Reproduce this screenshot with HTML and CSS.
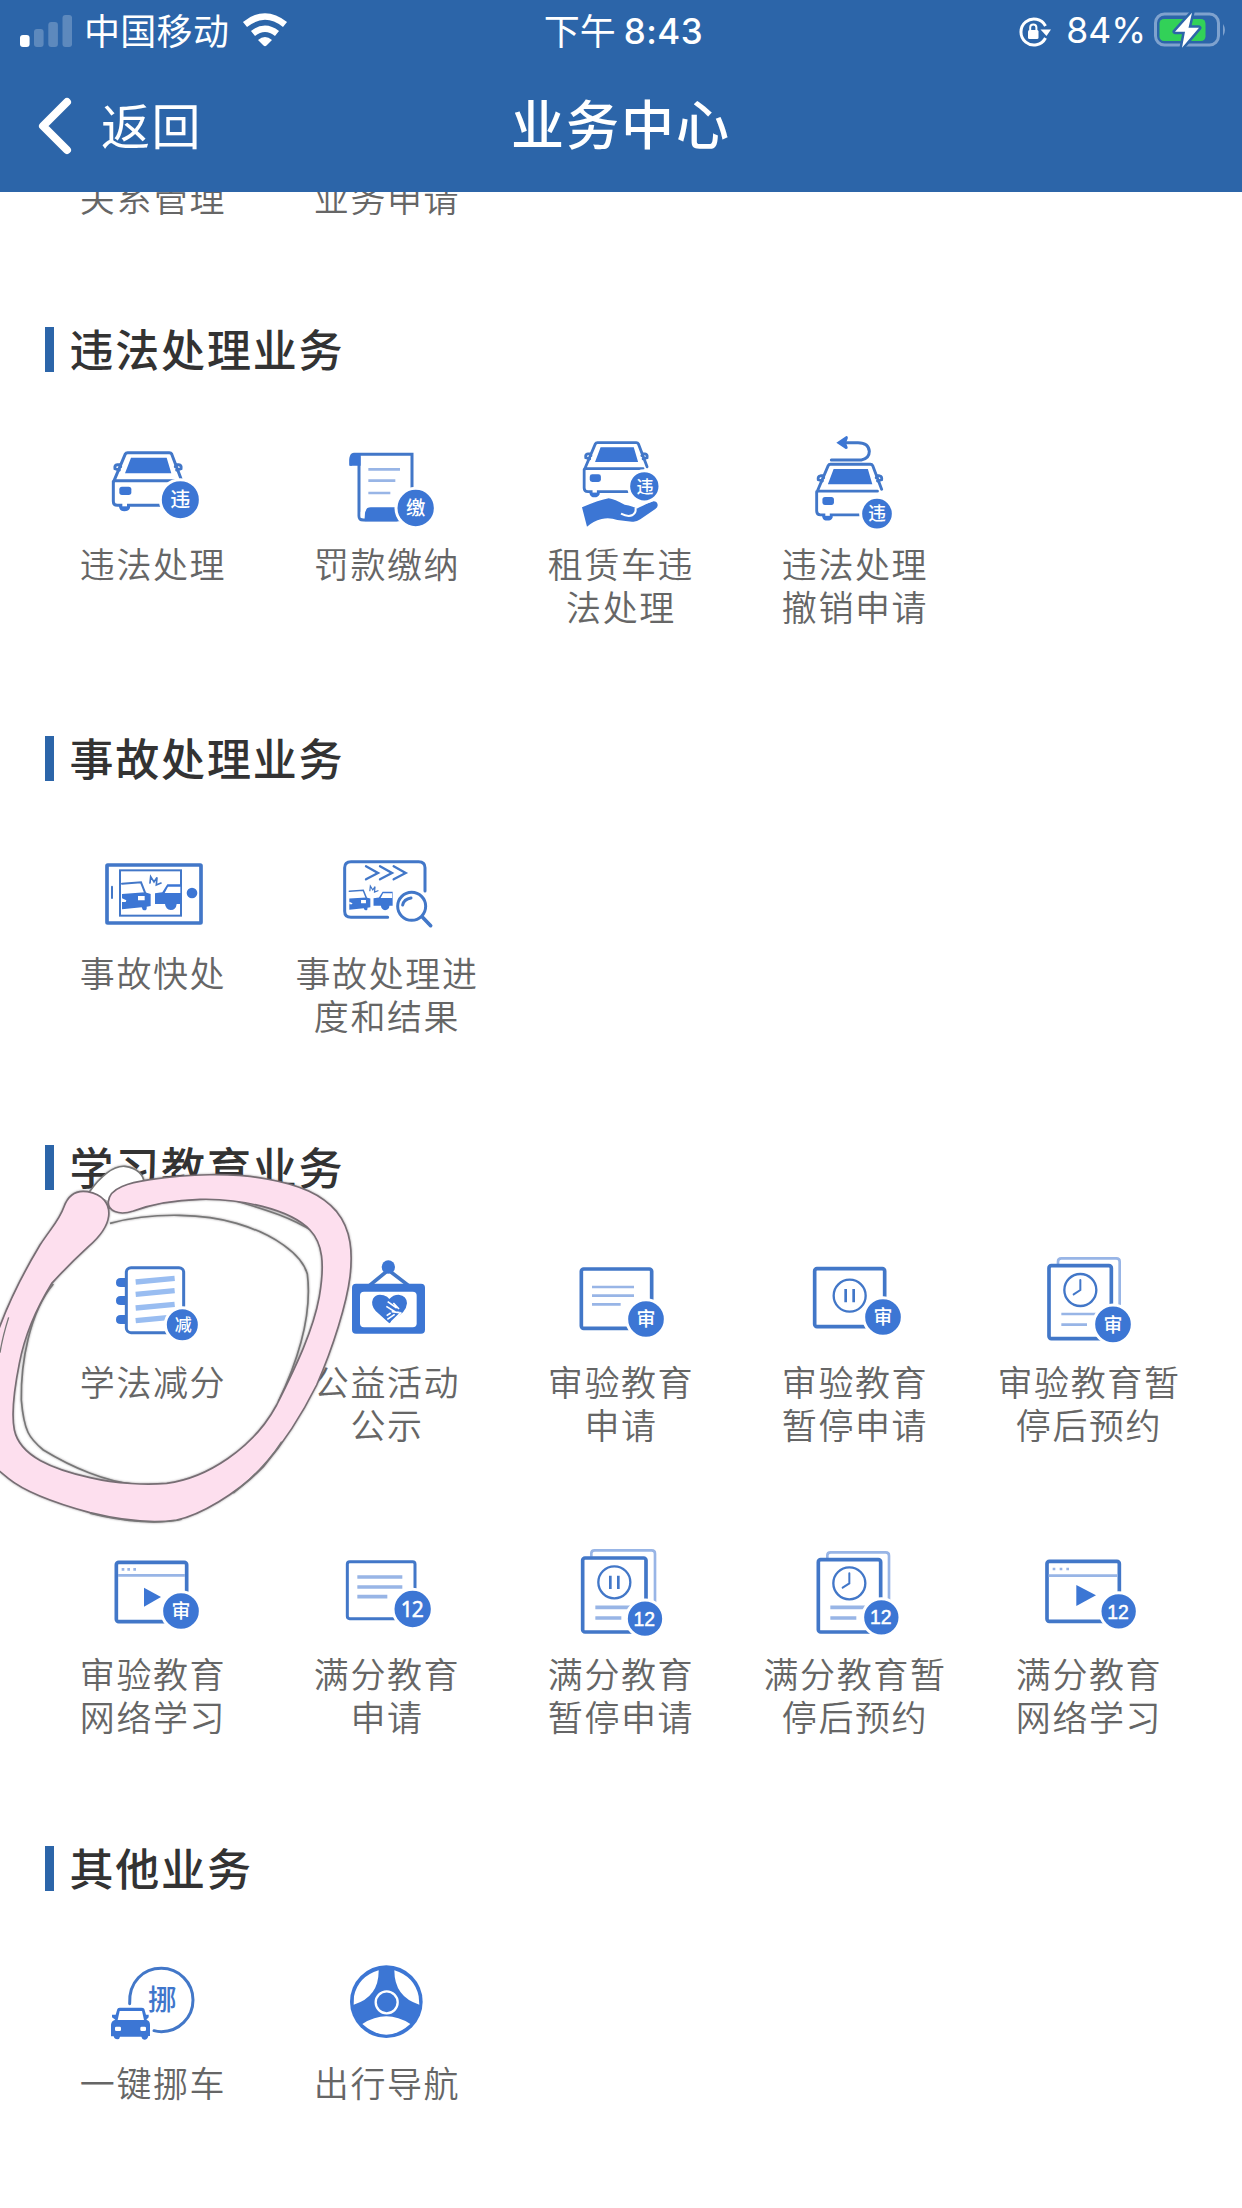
FILE: index.html
```html
<!DOCTYPE html>
<html lang="zh-CN">
<head>
<meta charset="utf-8">
<title>业务中心</title>
<link rel="stylesheet" href="styles.css">
</head>
<body>
<svg class="defs" aria-hidden="true">
  <defs>
    <g id="car">
      <path class="s9" d="M250 517L286 432Q288 428 293 428H418Q423 428 425 432L453 506M252 512H440M250 514V574Q250 586 262 586H390"/>
      <path class="s9" d="M272 470L268 464H262Q253 465 255 476L268 480M436 470L440 464H446Q455 465 453 476L440 480"/>
      <path class="f" d="M303 443H410L424 490H285ZM266 586H300V594Q296 604 283 604Q271 604 268 594Z"/>
      <rect class="f" x="268" y="530" width="36" height="25" rx="8"/>
      <path class="w" d="M277 577H291V589H277Z"/>
    </g>
    <g id="clock"><circle class="s7" cx="0" cy="0" r="48"/><path class="s6" d="M0 -30V0L-20 13"/></g>
    <g id="pause"><circle class="s7" cx="0" cy="0" r="48"/><path class="s8" d="M-12 -20V20M12 -20V20"/></g>
    <g id="crash">
      <path class="f" d="M276 522L345 517L362 522V558L350 560Q352 571 343 571Q337 571 335 562L276 568ZM375 520L397 517L412 493H453V552H440Q438 570 422 570Q407 569 405 552H375Z"/>
      <path class="s6" d="M276 491L333 487L346 520"/>
      <path class="w" d="M414 500H451V519H404ZM276 535L289 541L287 546H276ZM324 528H344V541H324Z"/>
      <path class="s5" d="M360 489L362 470L372 486L381 472L379 495L393 489"/>
    </g>
  </defs>
</svg>

<header class="topbar">
  <div class="status">
    <div class="status-left">
      <svg class="signal" viewBox="0 0 52 34"><rect x="0" y="21" width="9.6" height="12" rx="3"/><g opacity=".23"><rect x="14" y="15" width="9.6" height="18" rx="3"/><rect x="28.3" y="8" width="9.6" height="25" rx="3"/><rect x="42.5" y="1" width="9.6" height="32" rx="3"/></g></svg>
      <span class="carrier">中国移动</span>
      <svg class="wifi" viewBox="0 0 46 34"><path d="M3 11.500Q23 -4.500 43 11.500M11 20.500Q23 11 35 20.500"/><path class="dot" d="M16 27Q23 21 30 27L24.500 32.500Q23 34 21.500 32.500Z"/></svg>
    </div>
    <div class="clock"><span>下午</span><b>8:43</b></div>
    <div class="status-right">
      <svg class="lock" viewBox="0 0 34 30"><path d="M27.500 21A13 13 0 1 1 27.500 9"/><path class="fill" d="M22.500 12.500H33L28.500 19Z"/><rect class="fill" x="10" y="13" width="10.500" height="9" rx="1.500"/><path class="thin" d="M12.200 14V10.500A3.100 3.100 0 0 1 18.400 10.500V14"/></svg>
      <span class="percent">84%</span>
      <svg class="battery" viewBox="0 0 73 36"><rect class="shell" x="1.500" y="2" width="63" height="31" rx="9"/><path class="nub" d="M69 12Q73 18 69 24Z"/><rect class="charge" x="5.500" y="7" width="46" height="22" rx="4.500"/><path class="bolt" d="M38 .8L21 19.700H31L28 35.700L45 15.800H34.500Z"/></svg>
    </div>
  </div>
  <div class="nav">
    <div class="back"><svg viewBox="0 0 34 58"><path d="M29 5L5 29L29 53"/></svg><span>返回</span></div>
    <h1>业务中心</h1>
  </div>
</header>

<main>
  <div class="grid tail">
    <div class="label">关系管理</div>
    <div class="label">业务申请</div>
  </div>

  <section>
    <h2>违法处理业务</h2>
    <div class="grid">
      <div class="item">
        <svg class="icon" viewBox="186 378 360 300"><use href="#car"/><circle class="badge" cx="451" cy="569" r="60"/><text x="451" y="591" font-size="60">违</text></svg>
        <div class="label">违法处理</div>
      </div>
      <div class="item">
        <svg class="icon" viewBox="888 378 360 300"><path class="s9" d="M972 433H1146V536M987 440V618Q987 630 1000 630H1100M972 433Q963 434 963 448V463"/><path class="f" d="M958 467V450Q958 430 980 430H992V467ZM1004 634V612Q1004 592 1022 592H1118V634Z"/><path class="w" d="M992 606Q1001 586 1012 592Q1004 604 1002 624H992Z"/><path class="lt" d="M1015 478H1110M1015 512H1096M1015 549H1081"/><circle class="badge" cx="1157" cy="594" r="59"/><text x="1157" y="615" font-size="58">缴</text></svg>
        <div class="label">罚款缴纳</div>
      </div>
      <div class="item">
        <svg class="icon" viewBox="120 48 360 300"><use href="#car" transform="translate(-40 -330) scale(.93)"/><path class="f" d="M186 262Q238 240 266 235Q284 238 314 254Q340 258 350 266Q365 258 394 245Q410 241 413 254Q414 261 406 267L361 298Q349 307 336 305L292 300Q269 292 245 297Q219 304 201 320Z"/><path class="cut" d="M303 281Q324 292 338 285Q350 277 346 264"/><circle class="badge" cx="373" cy="199" r="47"/><text x="375" y="218" font-size="51">违</text></svg>
        <div class="label">租赁车违<br>法处理</div>
      </div>
      <div class="item">
        <svg class="icon" viewBox="822 48 360 300"><use href="#car" transform="translate(650 -278) scale(.96)"/><path class="s9" d="M934 120H1024Q1048 116 1048 94Q1046 68 1014 68H965"/><path class="f" d="M949 68L979 48Q985 48 983 56L978 68L983 82Q984 88 977 87Z"/><circle class="badge" cx="1071" cy="281" r="49"/><text x="1071" y="300" font-size="53">违</text></svg>
        <div class="label">违法处理<br>撤销申请</div>
      </div>
    </div>
  </section>

  <section>
    <h2>事故处理业务</h2>
    <div class="grid">
      <div class="item">
        <svg class="icon" viewBox="186 375 360 300"><rect class="s10" x="231" y="435" width="282" height="174" rx="2"/><rect class="s6" x="270" y="451" width="183" height="136"/><path class="s6" d="M246 500V534"/><circle class="f" cx="486" cy="519" r="16"/><use href="#crash"/></svg>
        <div class="label">事故快处</div>
      </div>
      <div class="item">
        <svg class="icon" viewBox="888 375 360 300"><path class="s9" d="M1185 513V443Q1185 425 1166 425H963Q944 425 944 443V574Q944 592 963 592H1073"/><path class="s7" d="M1008 439L1044 459L1008 478M1050 439L1086 459L1050 478M1091 439L1127 459L1091 478"/><use href="#crash" transform="translate(755 160) scale(.735 .72)"/><circle class="badge ring" cx="1145" cy="559" r="42"/><path class="s9" d="M1118 555Q1122 537 1143 534"/><path class="s10" d="M1177 591L1202 617"/></svg>
        <div class="label">事故处理进<br>度和结果</div>
      </div>
    </div>
  </section>

  <section class="learning">
    <h2>学习教育业务</h2>
    <div class="grid">
      <div class="item">
        <svg class="icon" viewBox="276 372 360 300"><path class="f" d="M378 444H362Q348 444 348 458Q348 471 362 471H378ZM378 498H362Q348 498 348 512Q348 525 362 525H378ZM378 555H362Q348 555 348 569Q348 582 362 582H378Z"/><rect class="s9" x="379" y="413" width="172" height="195" rx="14"/><path class="bars" d="M407 456L524 445M407 493L524 482M407 534L524 523M407 572L510 562"/><circle class="badge" cx="547" cy="584" r="51"/><text x="550" y="603" font-size="51">减</text></svg>
        <div class="label">学法减分</div>
      </div>
      <div class="item">
        <svg class="icon" viewBox="978 372 360 300"><path class="s10" d="M1108 467L1165 420L1226 467"/><circle class="f" cx="1165" cy="411" r="20"/><rect class="f" x="1056" y="461" width="219" height="150" rx="12"/><rect class="w" x="1080" y="485" width="170" height="107" rx="12"/><path class="f" d="M1168 580L1127 543Q1111 524 1119 506Q1129 490 1151 496Q1163 499 1168 507Q1179 494 1196 494Q1221 498 1221 520Q1220 534 1209 547Z"/><path class="cut slim" d="M1163 515L1190 534M1159 529L1186 546M1160 557L1172 549M1162 568L1184 553M1174 576L1204 547M1175 545L1199 548M1180 519L1197 537"/></svg>
        <div class="label">公益活动<br>公示</div>
      </div>
      <div class="item">
        <svg class="icon" viewBox="120 42 360 300"><rect class="s10" x="184" y="87" width="211" height="178" rx="7"/><path class="lt" d="M216 141H342M216 167H342M216 193H302"/><circle class="badge" cx="378" cy="237" r="58"/><text x="378" y="259" font-size="57">审</text></svg>
        <div class="label">审验教育<br>申请</div>
      </div>
      <div class="item">
        <svg class="icon" viewBox="822 42 360 300"><rect class="s10" x="884" y="86" width="210" height="174" rx="7"/><use href="#pause" x="989" y="167"/><circle class="badge" cx="1089" cy="231" r="58"/><text x="1089" y="252" font-size="57">审</text></svg>
        <div class="label">审验教育<br>暂停申请</div>
      </div>
      <div class="item">
        <svg class="icon" viewBox="444 42 360 300"><path class="lt" d="M534 75V65Q534 55 544 55H709Q719 55 719 65V205"/><rect class="s10" x="507" y="77" width="187" height="219" rx="7"/><use href="#clock" x="601" y="150"/><path class="lt" d="M544 222H650M544 254H621"/><circle class="badge" cx="699" cy="253" r="58"/><text x="699" y="275" font-size="57">审</text></svg>
        <div class="label">审验教育暂<br>停后预约</div>
      </div>
      <div class="item">
        <svg class="icon" viewBox="96 48 360 300"><rect class="s10" x="169" y="97" width="211" height="178" rx="7"/><path class="lt" d="M174 136H375M185 118H193M202 118H210M220 118H228"/><path class="f" d="M252 173L303 201L252 230Z"/><circle class="badge" cx="363" cy="243" r="58"/><text x="363" y="265" font-size="57">审</text></svg>
        <div class="label">审验教育<br>网络学习</div>
      </div>
      <div class="item">
        <svg class="icon" viewBox="798 48 360 300"><rect class="s9" x="862" y="95" width="203" height="171" rx="7"/><path class="lt thick" d="M892 141H1027M892 171H1027M892 200H982"/><circle class="badge" cx="1058" cy="237" r="59"/><text class="num wide" x="1055" y="260" font-size="63">12</text></svg>
        <div class="label">满分教育<br>申请</div>
      </div>
      <div class="item">
        <svg class="icon" viewBox="120 48 360 300"><path class="lt" d="M214 80V70Q214 61 224 61H395Q405 61 405 71V220"/><rect class="s10" x="188" y="84" width="190" height="222" rx="7"/><use href="#pause" x="283" y="157"/><path class="lt thick" d="M226 232H330M226 264H304"/><circle class="badge" cx="375" cy="266" r="56"/><text class="num" x="373" y="287" font-size="58">12</text></svg>
        <div class="label">满分教育<br>暂停申请</div>
      </div>
      <div class="item">
        <svg class="icon" viewBox="822 48 360 300"><path class="lt" d="M922 84V76Q922 67 932 67H1097Q1107 67 1107 77V218"/><rect class="s10" x="895" y="89" width="187" height="217" rx="7"/><use href="#clock" x="988" y="160"/><path class="lt thick" d="M931 232H1036M931 264H1009"/><circle class="badge" cx="1084" cy="262" r="56"/><text class="num" x="1082" y="283" font-size="58">12</text></svg>
        <div class="label">满分教育暂<br>停后预约</div>
      </div>
      <div class="item">
        <svg class="icon" viewBox="444 48 360 300"><rect class="s10" x="501" y="94" width="217" height="180" rx="7"/><path class="lt" d="M506 137H713M518 117H526M539 117H547M559 117H567"/><path class="f" d="M589 165L648 196L589 228Z"/><circle class="badge" cx="716" cy="244" r="56"/><text class="num" x="714" y="266" font-size="58">12</text></svg>
        <div class="label">满分教育<br>网络学习</div>
      </div>
    </div>
    <svg class="doodle" viewBox="0 0 1440 1200">
      <path class="cap" d="M268 186C300 140 340 106 375 109C412 114 430 135 432 156L330 215Z"/>
      <path class="sketch" d="M268 186C300 140 340 106 375 109C412 114 430 135 432 156"/>
      <path class="sketch" d="M330 280C470 243 620 253 710 280C820 312 905 372 922 432C938 560 890 700 835 815M700 210C780 235 860 255 940 305"/>
      <path class="sketch" d="M160 462C88 548 62 700 64 810C72 905 88 925 130 960C220 1015 320 1055 400 1062"/>
      <path class="band" d="M325 215C328 172 390 158 450 149C560 132 700 127 800 147C900 165 965 193 1010 245C1055 300 1058 370 1050 440C1040 520 1000 650 950 765C900 865 850 940 790 1010C710 1092 600 1155 530 1170C450 1182 360 1170 270 1148C150 1115 70 1082 25 1045L-30 1000V680C0 570 60 445 120 345C155 292 178 270 192 230C205 195 230 180 262 185C308 193 330 220 326 258C322 292 295 324 265 350C230 382 190 422 155 460C115 525 75 610 58 700C42 780 33 850 43 900C60 980 160 1018 270 1043C350 1062 440 1065 500 1060C620 1045 760 955 830 825C890 705 940 600 958 500C975 400 968 340 930 300C870 237 720 205 600 208C500 211 440 228 400 243C355 258 323 242 325 215Z"/>
      <path class="sketch faint" d="M0 668C6 630 14 600 26 562M270 1150C380 1178 480 1182 545 1168M700 1090C750 1050 800 1005 845 935"/>
    </svg>
  </section>

  <section>
    <h2>其他业务</h2>
    <div class="grid">
      <div class="item">
        <svg class="icon" viewBox="186 375 360 300"><path class="s9" d="M299 521C296 455 340 415 394 415A95 95 0 0 1 394 605Q382 605 372 602"/><path class="f" d="M243 584Q244 572 256 569L246 562V554H257L262 537Q264 533 270 533H334Q341 533 343 537L348 554H356V562L349 569Q360 572 360 584V618H355Q353 629 343 629Q336 628 334 620H270Q269 628 262 628Q253 628 251 619H243Z"/><path class="w" d="M269 543H336L342 570H263Z"/><rect class="w" x="255" y="590" width="18" height="13" rx="4"/><rect class="w" x="331" y="590" width="17" height="13" rx="4"/><text class="blue" x="397" y="540" font-size="86">挪</text></svg>
        <div class="label">一键挪车</div>
      </div>
      <div class="item">
        <svg class="icon" viewBox="888 375 360 300"><circle class="f" cx="1069" cy="515" r="109"/><path class="w" d="M1046 421Q984 440 972 499L971 524Q1047 501 1046 421ZM1093 421Q1154 440 1166 499L1168 524Q1093 501 1093 421ZM997 582Q1069 536 1141 582Q1069 646 997 582Z"/><circle class="hub" cx="1070" cy="517" r="33"/></svg>
        <div class="label">出行导航</div>
      </div>
    </div>
  </section>
</main>
</body>
</html>
```
FILE: styles.css
```css
* { box-sizing: border-box; }
body {
  margin: 0;
  width: 1242px;
  height: 2208px;
  overflow: hidden;
  background: #fff;
  font-family: "Noto Sans CJK SC", sans-serif;
}
.defs { display: block; width: 0; height: 0; }

/* Header */
.topbar { height: 192px; background: #2c65a9; color: #fff; }
.status {
  height: 62px;
  padding: 0 15px 0 20px;
  display: grid;
  grid-template-columns: 1fr auto 1fr;
  align-items: center;
  font-size: 36px;
  line-height: 62px;
}
.status-left, .status-right { display: flex; align-items: center; }
.status-right { justify-content: flex-end; }
.signal { width: 52px; height: 34px; fill: #fff; }
.carrier { margin: -4px 0 0 12px; letter-spacing: .3px; }
.wifi { width: 46px; height: 34px; margin: -2px 0 0 13px; fill: none; stroke: #fff; stroke-width: 6.5; }
.wifi .dot { fill: #fff; stroke: none; }
.clock { display: flex; align-items: center; }
.clock span { margin-top: -4px; }
.clock b { font: 500 35px/62px Inter, sans-serif; margin-left: 8px; letter-spacing: .5px; }
.lock { width: 34px; height: 30px; margin-top: 2px; fill: none; stroke: #fff; stroke-width: 3; }
.lock .fill { fill: #fff; stroke: none; }
.lock .thin { stroke-width: 2; }
.percent { font: 400 35.500px/62px Inter, sans-serif; margin-left: 14px; }
.battery { width: 73px; height: 36px; margin: -2px 0 0 8px; }
.shell { fill: none; stroke: #7fa2ce; stroke-width: 3; }
.nub { fill: #7fa2ce; }
.charge { fill: #32d158; }
.bolt { fill: #fff; stroke: #2c65a9; stroke-width: 5; stroke-linejoin: round; paint-order: stroke; }

.nav {
  height: 130px;
  padding: 0 38px;
  display: grid;
  grid-template-columns: 1fr auto 1fr;
  align-items: center;
}
.back { display: flex; align-items: center; font-size: 49px; letter-spacing: 1.500px; line-height: 66px; }
.back span { margin-top: -7px; }
.back svg { width: 34px; height: 58px; margin: -2px 29px 0 0; fill: none; stroke: #fff; stroke-width: 8; stroke-linecap: round; stroke-linejoin: round; }
.nav h1 { margin: -10px 0 0; font-size: 53px; font-weight: 500; letter-spacing: 2px; line-height: 72px; }

/* Sections */
main { height: 2016px; overflow: hidden; }
.grid { display: grid; grid-template-columns: repeat(5, 234px); padding: 0 35px; }
.tail { height: 135px; margin-top: -17px; margin-bottom: 17px; }
section { position: relative; }
h2 {
  margin: 0 45px 64px;
  height: 45px;
  border-left: 9px solid #2c65a9;
  padding-left: 15.500px;
  color: #333;
  font-size: 44px;
  font-weight: 500;
  letter-spacing: 1.800px;
  line-height: 43px;
}
.item { height: 292px; }
section > .grid { margin-bottom: 8px; }
.icon { display: block; width: 120px; height: 100px; margin: 0 auto 5px; overflow: visible; }
.label { padding-left: 2px; color: #666; font-size: 35px; font-weight: 350; letter-spacing: 1.600px; line-height: 43.300px; text-align: center; }

/* Icon parts */
.f { fill: #3c76d4; }
.w { fill: #fff; }
.s5, .s6, .s7, .s8, .s9, .s10 { fill: none; stroke: #4277c8; stroke-linecap: round; }
.s5 { stroke-width: 5; }
.s6 { stroke-width: 6; }
.s7 { stroke-width: 7; }
.s8 { stroke-width: 8; stroke-linecap: butt; }
.s9 { stroke-width: 9; }
.s10 { stroke-width: 11; }
.lt { fill: none; stroke: #98b5e6; stroke-width: 8; }
.lt.thick { stroke-width: 11; }
.bars { fill: none; stroke: #99bdf1; stroke-width: 16; }
.cut { fill: none; stroke: #fff; stroke-width: 6; }
.cut.slim { stroke-width: 5; }
.badge { fill: #3c76d4; stroke: #fff; stroke-width: 9; }
.ring { fill: #fff; stroke: #4277c8; }
.hub { fill: #3c76d4; stroke: #fff; stroke-width: 7; }
.icon text { fill: #fff; text-anchor: middle; font-weight: 500; }
.icon .blue { fill: #3f76cb; }
.icon .num { font-family: "Liberation Sans", sans-serif; stroke: #fff; stroke-width: 1.500; }
.icon .wide { font-family: "Noto Sans", sans-serif; font-weight: 400; letter-spacing: -3px; }

/* Hand-drawn mark over the first learning entry */
.doodle { position: absolute; left: 0; top: -15px; width: 480px; height: 400px; filter: drop-shadow(0 0 1px rgba(70, 60, 65, .5)); }
.band { fill: #fddfee; stroke: #776e74; stroke-width: 5; }
.sketch { fill: none; stroke: #777; stroke-width: 5; }
.cap { fill: #fff; }
.faint { stroke-width: 4; }
```
